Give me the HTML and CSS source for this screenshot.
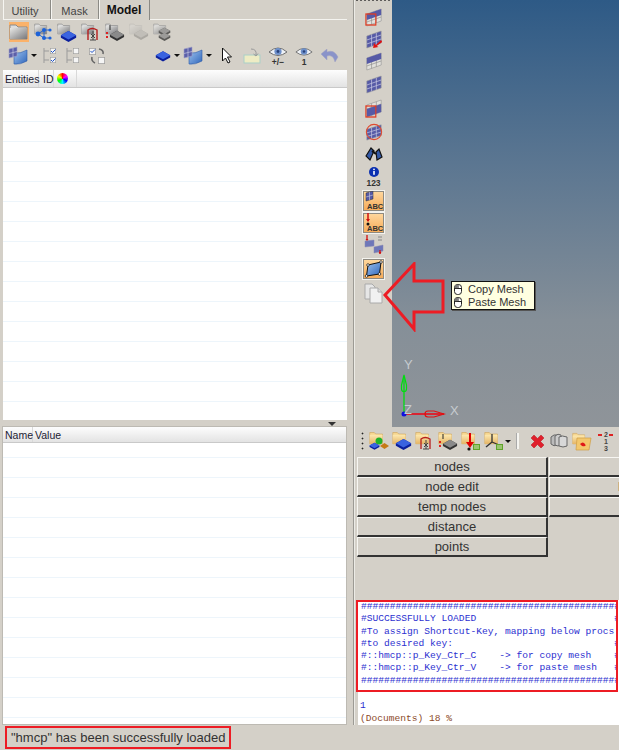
FILE: index.html
```html
<!DOCTYPE html>
<html lang="en">
<head>
<meta charset="utf-8">
<title>HyperMesh</title>
<link rel="stylesheet" href="styles.css">
</head>
<body>
<svg class="defs" width="0" height="0" aria-hidden="true">
  <defs>
    <linearGradient id="gf" x1="0" y1="0" x2="1" y2="1"><stop offset="0" stop-color="#e8e8e6"/><stop offset="1" stop-color="#77777a"/></linearGradient>
    <linearGradient id="yf" x1="0" y1="0" x2="0" y2="1"><stop offset="0" stop-color="#fde9b0"/><stop offset="1" stop-color="#e5b566"/></linearGradient>
    <linearGradient id="bm" x1="0" y1="0" x2="1" y2="1"><stop offset="0" stop-color="#9fc3ee"/><stop offset="1" stop-color="#2f66bb"/></linearGradient>
    <symbol id="folder" viewBox="0 0 20 20"><path d="M1 3h6l2 2h9v12H1z" fill="#ddd" stroke="#8b8b8b"/><path d="M1 6h17v11H1z" fill="url(#gf)"/></symbol>
    <symbol id="yfolder" viewBox="0 0 20 20"><path d="M1 2h6l2 2h9v13H1z" fill="#f6d68f" stroke="#c99d50" stroke-width=".7"/><path d="M1 5h17v12H1z" fill="url(#yf)"/></symbol>
    <symbol id="cube" viewBox="0 0 20 14"><path d="M1 6l9-5 9 5v3l-9 5-9-5z" fill="#0b1f9c"/><path d="M1 6l9-5 9 5-9 5z" fill="#3a63e0"/></symbol>
    <symbol id="gcube" viewBox="0 0 20 14"><path d="M1 6l9-5 9 5v3l-9 5-9-5z" fill="#333"/><path d="M1 6l9-5 9 5-9 5z" fill="#8a8a8a"/></symbol>
    <symbol id="mesh" viewBox="0 0 20 20"><path d="M2 7l16-5v12L2 19z" fill="#565aa6" stroke="#9a9a9a" stroke-width=".6"/><path d="M7.300 5.500v12M12.600 3.800v12M2 11l16-5M2 15l16-5" stroke="#c3c5e0" stroke-width=".8" fill="none"/></symbol>
    <symbol id="hmesh" viewBox="0 0 20 20"><path d="M2 7l16-5v12L2 19z" fill="#e2e1dc" stroke="#8d8d8d" stroke-width=".6"/><path d="M7.300 5.500v12M12.600 3.800v12M2 11l16-5M2 15l16-5" stroke="#8d8d8d" stroke-width=".7" fill="none"/></symbol>
    <symbol id="bsurf" viewBox="0 0 20 20"><path d="M6 7q6 1 13-3v11q-7 4-13 3z" fill="url(#bm)" stroke="#2d5aa8" stroke-width=".6"/><path d="M1 3l8-2v9l-8 2z" fill="#5b5fa9" stroke="#9ea0c8" stroke-width=".6"/><path d="M5 2v9M1 7.500l8-2" stroke="#c3c5e0" stroke-width=".7"/></symbol>
    <symbol id="eye" viewBox="0 0 20 12"><path d="M1 6q9-8 18 0q-9 7-18 0z" fill="#eef1f6" stroke="#6d6d6d"/><circle cx="10" cy="5.500" r="3.600" fill="#6d8fc9"/><circle cx="10" cy="5.500" r="1.400" fill="#27417c"/></symbol>
    <symbol id="check" viewBox="0 0 10 10"><rect x=".5" y=".5" width="9" height="9" fill="#f5f5f5" stroke="#9b9b9b"/></symbol>
    <symbol id="mouse" viewBox="0 0 8 11"><rect x=".5" y=".5" width="7" height="10" rx="3" fill="#fff" stroke="#222"/><path d="M.5 4.500h7M4 .5v4" stroke="#222"/><rect x="1" y="1" width="2.600" height="3.200" fill="#777"/></symbol>
  </defs>
</svg>

<div class="app">
  <aside class="left">
    <nav class="tabs">
      <span class="tab tab-first">Utility</span>
      <span class="tab">Mask</span>
      <span class="tab tab-active">Model</span>
    </nav>
    <div class="tool-row tool-row-a">
      <span class="ic ic-on"><svg width="20" height="20"><use href="#folder"/></svg></span>
      <span class="ic"><svg width="20" height="20" viewBox="0 0 20 20"><use href="#folder" width="14" height="14" x="1" y="0"/><path d="M5 12l6-4 5 0M11 8v8M5 12l6 4 5 0" stroke="#2c67c9" fill="none"/><circle cx="5" cy="12" r="2.400" fill="#1d62d8"/><circle cx="11" cy="8" r="2" fill="#1d62d8"/><circle cx="11" cy="16" r="2" fill="#1d62d8"/><circle cx="17" cy="8" r="1.600" fill="#1d62d8"/><circle cx="17" cy="16" r="1.600" fill="#1d62d8"/></svg></span>
      <span class="ic"><svg width="20" height="20" viewBox="0 0 20 20"><use href="#folder" width="14" height="14" x="0" y="0"/><use href="#cube" x="3" y="8" width="17" height="12"/></svg></span>
      <span class="ic"><svg width="20" height="20" viewBox="0 0 20 20"><use href="#folder" width="14" height="14" x="0" y="0"/><path d="M7 18V8q4-3 9 0v10" fill="none" stroke="#b71d1d" stroke-width="1.400"/><path d="M9 18h6M12 9v9M10 12l4 4M14 12l-4 4" stroke="#444" fill="none"/></svg></span>
      <span class="ic"><svg width="20" height="20" viewBox="0 0 20 20"><use href="#folder" width="14" height="14" x="0" y="0"/><use href="#gcube" x="4" y="8" width="16" height="11"/><path d="M5 3v5" stroke="#222"/><path d="M1 11h2M1 15h2" stroke="#d22" stroke-width="2"/></svg></span>
      <span class="ic ic-dim"><svg width="20" height="20" viewBox="0 0 20 20"><use href="#folder" width="14" height="14" x="0" y="0"/><use href="#gcube" x="4" y="7" width="16" height="11"/></svg></span>
      <span class="ic ic-half"><svg width="20" height="20" viewBox="0 0 20 20"><use href="#folder" width="14" height="14" x="0" y="0"/><use href="#gcube" x="5" y="5" width="13" height="9"/><use href="#gcube" x="5" y="10" width="13" height="9"/></svg></span>
    </div>
    <div class="tool-row tool-row-b">
      <span class="ic"><svg width="20" height="20"><use href="#bsurf"/></svg></span><span class="drop"></span>
      <span class="ic ic-list"><svg width="16" height="18" viewBox="0 0 16 18"><path d="M1 1v15M1 4h5M1 13h5" stroke="#9b9b9b" fill="none"/><use href="#check" x="6" y="1" width="8" height="6"/><use href="#check" x="6" y="10" width="8" height="6"/><path d="M8 4l1.500 1.500 3-3M8 13l1.500 1.500 3-3" stroke="#1c50c8" fill="none"/></svg></span>
      <span class="ic ic-list"><svg width="16" height="18" viewBox="0 0 16 18"><path d="M1 1v15M1 4h5M1 13h5" stroke="#9b9b9b" fill="none"/><use href="#check" x="6" y="1" width="8" height="6"/><use href="#check" x="6" y="10" width="8" height="6"/></svg></span>
      <span class="ic ic-list"><svg width="18" height="18" viewBox="0 0 18 18"><use href="#check" x="1" y="1" width="7" height="7"/><use href="#check" x="10" y="10" width="7" height="7"/><path d="M2.500 4l1.500 1.500 3-3" stroke="#1c50c8" fill="none"/><path d="M11 2q5 1 4 5M4 10q-1 4 3 6" stroke="#666" stroke-width="1.600" fill="none"/></svg></span>
      <span class="ic ic-far"><svg width="16" height="12"><use href="#cube"/></svg></span><span class="drop"></span>
      <span class="ic"><svg width="20" height="20"><use href="#bsurf"/></svg></span><span class="drop"></span>
      <span class="ic ic-arrow"><svg width="12" height="18" viewBox="0 0 12 18"><path d="M1.500 1v13l3-3 2.500 5 2-1-2.500-5h4z" fill="#fff" stroke="#111"/></svg></span>
      <span class="ic ic-sw"><svg width="18" height="18" viewBox="0 0 18 18"><rect x="1" y="8" width="16" height="8" fill="#eeecc4" stroke="#a9cfc8"/><path d="M8 2q6 0 5 6M10.500 7l2.500 2 2-2.500" stroke="#999" fill="none"/></svg></span>
      <span class="ic ic-eye"><svg width="20" height="12"><use href="#eye"/></svg><b>+/−</b></span>
      <span class="ic ic-eye"><svg width="18" height="12"><use href="#eye"/></svg><b>1</b></span>
      <span class="ic"><svg width="18" height="14" viewBox="0 0 18 14"><path d="M17 8Q13 0 6 3V0L0 5l6 6V7q6-2 8 6z" fill="#8a93c9" stroke="#a3a3c0" stroke-width=".5"/></svg></span>
    </div>
    <section class="table table-top">
      <div class="thead"><span class="th th-ent">Entities</span><span class="th th-id">ID</span><span class="th th-col"><span class="wheel"></span></span></div>
      <div class="tbody"></div>
    </section>
    <div class="splitter"><span class="tri"></span></div>
    <section class="table table-bottom">
      <div class="thead"><span class="th th-name">Name</span><span class="th">Value</span></div>
      <div class="tbody tbody-b"></div>
    </section>
  </aside>

  <div class="sash"></div>

  <main class="right">
    <div class="stage">
      <div class="strip">
        <span class="grip-top"></span>
        <span class="s s22"><svg width="18" height="20" viewBox="0 0 20 20" preserveAspectRatio="none"><use href="#hmesh"/><path d="M2 7l16-5v6L2 13z" fill="#565aa6"/><rect x="1" y="7" width="11" height="11" fill="none" stroke="#e03c24" stroke-width="1.300"/></svg></span>
        <span class="s s22"><svg width="18" height="20" viewBox="0 0 20 20" preserveAspectRatio="none"><use href="#mesh"/><path d="M18 11l-6 5-2-2-1 5 6-1-2-1 6-4z" fill="#e01010"/></svg></span>
        <span class="s s22"><svg width="18" height="20" viewBox="0 0 20 20" preserveAspectRatio="none"><use href="#hmesh"/><path d="M2 7l16-5v6L2 13z" fill="#565aa6"/></svg></span>
        <span class="s s24"><svg width="18" height="20" viewBox="0 0 20 20" preserveAspectRatio="none"><use href="#mesh"/></svg></span>
        <span class="s s24"><svg width="18" height="20" viewBox="0 0 20 20" preserveAspectRatio="none"><use href="#hmesh"/><path d="M2 11l16-5v8L2 19z" fill="#565aa6"/><rect x="1" y="8" width="11" height="11" fill="none" stroke="#e03c24" stroke-width="1.300"/></svg></span>
        <span class="s s23"><svg width="18" height="18" viewBox="0 0 20 20"><use href="#mesh"/><circle cx="10" cy="10" r="8.500" fill="none" stroke="#e04a30" stroke-width="1.200"/></svg></span>
        <span class="s s22"><svg width="18" height="16" viewBox="0 0 18 16"><path d="M1 10l5-8 3 3-4 9zM11 6l3-3 3 8-5 3z" fill="#345aa8" stroke="#111" stroke-width="1.200"/><path d="M7 5l4 3" stroke="#111" stroke-width="2"/></svg></span>
        <span class="s s24 s-info"><svg width="10" height="10" viewBox="0 0 9 9"><circle cx="4.500" cy="4.500" r="4.500" fill="#0a2fb0"/><rect x="3.800" y="3.500" width="1.400" height="3.500" fill="#fff"/><rect x="3.800" y="1.500" width="1.400" height="1.200" fill="#fff"/></svg><b>123</b></span>
        <span class="s s23"><span class="orange"><svg width="20" height="20" viewBox="0 0 20 20"><path d="M2 2l7-2v8l-7 2z" fill="#565aa6" stroke="#333" stroke-width=".5"/><path d="M5.500 1v8M2 6l7-2" stroke="#ccd" stroke-width=".6"/><text x="3" y="18" class="abc">ABC</text></svg></span></span>
        <span class="s s22"><span class="orange"><svg width="20" height="20" viewBox="0 0 20 20"><path d="M4 0v8" stroke="#d01010" stroke-width="1.500"/><path d="M2 6l2 3 2-3z" fill="#d01010"/><circle cx="4" cy="11" r="1.500" fill="#111"/><text x="3" y="18" class="abc">ABC</text></svg></span></span>
        <span class="s s22"><svg width="20" height="20" viewBox="0 0 20 20"><path d="M1 6l9-1v6l-9 1zM10 12l9-2v6l-9 2z" fill="#6e77b9" stroke="#8a8ab0" stroke-width=".5"/><path d="M3 0v5M16 15v4" stroke="#d01010" stroke-width="1.300"/><path d="M1.500 4l1.500 2 1.500-2zM14.500 17l1.500 2 1.500-2z" fill="#d01010"/><path d="M14 2h4M14 5h4" stroke="#888"/></svg></span>
        <span class="s s25"><span class="orange"><svg width="20" height="20" viewBox="0 0 20 20"><path d="M4 6l13-3-1.500 12-13 2z" fill="url(#bm)" stroke="#111"/><g fill="#fff" stroke="#111" stroke-width=".7"><circle cx="4" cy="6" r="1.300"/><circle cx="17" cy="3" r="1.300"/><circle cx="15.500" cy="15" r="1.300"/><circle cx="2.500" cy="17" r="1.300"/></g></svg></span></span>
        <span class="s s24"><svg width="19" height="21" viewBox="0 0 19 21"><path d="M1 1h7l3 3v12H1z" fill="#e6e6e6" stroke="#aaa"/><path d="M6 5h8l4 4v11H6z" fill="#f1f1f1" stroke="#aaa"/><path d="M14 5v4h4" fill="#ddd" stroke="#aaa"/></svg></span>
      </div>
      <div class="viewport">
        <svg class="axes" width="70" height="60" viewBox="0 0 70 60"><path d="M12 54V17" stroke="#00dd10" stroke-width="1.300"/><path d="M12 15l2.500 10v4a2.500 2.500 0 0 1-5 0v-4z" fill="none" stroke="#00dd10" stroke-width="1.200"/><path d="M12 54h40" stroke="#f00010" stroke-width="1.300"/><path d="M52 54l-10-3h-6a3 3 0 0 0 0 6h6z" fill="none" stroke="#e01010" stroke-width="1.200"/><circle cx="12" cy="54" r="2.500" fill="#1010e0"/><text x="12" y="9" class="ax">Y</text><text x="12" y="54" class="ax">Z</text><text x="58" y="55" class="ax">X</text></svg>
      </div>
      <svg class="callout" width="68" height="70" viewBox="0 0 68 70"><path d="M3 33L32 2v17h29v31H32v17z" fill="none" stroke="#ed1c24" stroke-width="3"/></svg>
      <div class="tooltip">
        <div class="tip-row"><svg width="8" height="11"><use href="#mouse"/></svg><span>Copy Mesh</span></div>
        <div class="tip-row"><svg width="8" height="11"><use href="#mouse"/></svg><span>Paste Mesh</span></div>
      </div>
    </div>

    <div class="toolbar">
      <span class="dots"></span>
      <svg width="20" height="20" viewBox="0 0 20 20"><use href="#yfolder" width="15" height="15"/><circle cx="10" cy="10" r="3.500" fill="#1fb32a"/><use href="#cube" x="0" y="11" width="11" height="8"/><path d="M11 15l4.500-3 4.500 3-4.500 3z" fill="#c57a16"/></svg>
      <svg width="20" height="20" viewBox="0 0 20 20"><use href="#yfolder" width="15" height="15"/><use href="#cube" x="3" y="7" width="17" height="12"/></svg>
      <svg width="20" height="20" viewBox="0 0 20 20"><use href="#yfolder" width="15" height="15"/><path d="M6 18V8q4-3 9 0v10" fill="none" stroke="#b71d1d" stroke-width="1.300"/><path d="M8 18h6M11 9v9M9 12l4 4M13 12l-4 4" stroke="#444" fill="none"/></svg>
      <svg width="20" height="20" viewBox="0 0 20 20"><use href="#yfolder" width="15" height="15"/><use href="#gcube" x="4" y="8" width="16" height="11"/><path d="M5 3v5" stroke="#222"/><path d="M1 11h2M1 15h2" stroke="#d22" stroke-width="2"/></svg>
      <svg width="20" height="20" viewBox="0 0 20 20"><use href="#yfolder" width="15" height="15"/><path d="M9 2v12" stroke="#e00000" stroke-width="2"/><path d="M5 11l4 6 4-6z" fill="#e00000"/><circle cx="8" cy="18" r="1.600" fill="#111"/><rect x="12" y="13" width="7" height="6" fill="#5fa32a"/><path d="M13 15h5M13 17h5" stroke="#d6e6b5"/></svg>
      <svg width="20" height="20" viewBox="0 0 20 20"><use href="#yfolder" width="15" height="15"/><path d="M8 11V3M8 11l-6 5M8 11l7 3" stroke="#333" stroke-width="1.300"/><rect x="12" y="13" width="7" height="6" fill="#5fa32a"/><path d="M13 15h5M13 17h5" stroke="#d6e6b5"/></svg>
      <span class="drop"></span>
      <span class="vsep"></span>
      <svg width="17" height="17" viewBox="0 0 17 17"><path d="M2 5l3-3 3.500 3.500L12 2l3 3-3.500 3.500L15 12l-3 3-3.500-3.500L5 15l-3-3 3.500-3.500z" fill="#e0202c" stroke="#b31a20" stroke-width=".5"/></svg>
      <svg width="20" height="18" viewBox="0 0 20 18"><path d="M2 5q3-3 6-2v10q-3 2-6-1z" fill="#bbb" stroke="#666"/><path d="M6 4q3-3 6-1v10q-3 2-6 0z" fill="#ccc" stroke="#666"/><path d="M10 5q3-2 8 0v9q-4 2-8 0z" fill="#d8d8d8" stroke="#666"/></svg>
      <svg width="20" height="19" viewBox="0 0 20 19"><use href="#yfolder" width="14" height="14"/><path d="M5 6h14l-2 12H4z" fill="#f3c76c" stroke="#cf9d45" stroke-width=".7"/><path d="M8 12q3-3 5 0t-3 2z" fill="#e01818"/></svg>
      <span class="nums"><i class="n2">2</i><i class="n1">1</i><i class="n3">3</i></span>
    </div>

    <div class="buttons">
      <div class="btn-col btn-col-main">
        <button class="btn">nodes</button>
        <button class="btn">node edit</button>
        <button class="btn">temp nodes</button>
        <button class="btn">distance</button>
        <button class="btn">points</button>
      </div>
      <div class="btn-col btn-col-side">
        <button class="btn"></button>
        <button class="btn">line edit</button>
        <button class="btn"></button>
      </div>
    </div>

    <div class="console">
      <div class="loaded">
<pre class="blue">##############################################
#SUCCESSFULLY LOADED                        #
#To assign Shortcut-Key, mapping below procs:
#to desired key:                            #
#::hmcp::p_Key_Ctr_C    -> for copy mesh    #
#::hmcp::p_Key_Ctr_V    -> for paste mesh   #
##############################################</pre>
      </div>
      <pre class="out"><span class="blue">1</span>
<span class="brown">(Documents) 18 %</span></pre>
    </div>
  </main>

  <footer class="status"><span class="status-msg">"hmcp" has been successfully loaded</span></footer>
</div>
</body>
</html>
```

FILE: styles.css
```css
* { box-sizing: border-box; }
html, body { margin: 0; height: 100%; }
body {
  width: 619px;
  height: 750px;
  overflow: hidden;
  background: #d4d0c8;
  font-family: "Liberation Sans", Arial, sans-serif;
  font-size: 11px;
  color: #222;
}
.defs { position: absolute; }
.app {
  display: grid;
  grid-template-columns: 347px 8px 264px;
  grid-template-rows: 725px 25px;
  width: 619px;
  height: 750px;
}

/* left panel */
.left { display: flex; flex-direction: column; padding-left: 3px; min-height: 0; }
.tabs { display: flex; height: 20px; border-bottom: 1px solid #f4f3ef; }
.tab {
  width: 48px;
  height: 19px;
  padding-top: 5px;
  text-align: center;
  color: #444;
  font-size: 11px;
  border-right: 1px solid #8b8a85;
  background: #d4d0c8;
  box-shadow: inset 1px 0 #f6f5f1;
}
.tab-first { padding-right: 3px; }
.tab-active { width: 51px; height: 20px; padding-top: 3px; font-weight: bold; color: #111; font-size: 12px; }
.tool-row { display: flex; align-items: center; }
.tool-row-a { height: 23px; padding-left: 6px; gap: 4px; }
.tool-row-b { height: 27px; padding: 0 0 2px 5px; }
.ic { display: flex; flex-direction: column; align-items: center; flex: none; width: 20px; }
.ic-on { background: #fbb26a; height: 20px; justify-content: center; }
.ic-dim { opacity: .25; }
.ic-half { opacity: .75; }
.ic-list { margin-left: 3px; width: 16px; margin-right: 4px; }
.ic-far { width: 16px; margin-left: 46px; }
.ic-arrow { width: 14px; margin-left: 5px; }
.ic-sw { margin-left: 8px; }
.ic-eye { margin-left: 6px; width: 20px; }
.ic-eye + .ic-eye { margin-left: 6px; }
.ic-eye + .ic { margin-left: 6px; }
.ic-eye b { font-size: 8.500px; line-height: 8px; color: #333; }
.drop { flex: none; width: 0; height: 0; margin: 0 3px; border: 3px solid transparent; border-top: 3px solid #111; border-bottom: 0; }

.table { display: flex; flex-direction: column; background: #fff; }
.table-top { height: 350px; }
.table-bottom { flex: 1; box-shadow: 0 0 0 1px #bdbab3; margin-right: 1px; margin-bottom: 1px; }
.thead {
  display: flex;
  flex: none;
  height: 18px;
  background: linear-gradient(#fdfdfd, #e3e3e3);
  border-bottom: 1px solid #c9c9c9;
}
.table-bottom .thead { height: 16px; }
.th { padding: 3px 2px 0; font-size: 10.500px; color: #223; border-right: 1px solid #d9d9d9; line-height: 13px; }
.table-bottom .th { padding-top: 2px; }
.th-ent { width: 36px; }
.th-id { width: 15px; padding-left: 4px; }
.th-col { width: 23px; display: flex; align-items: center; padding: 0 0 0 3px; }
.th-name { width: 30px; }
.table-bottom .th:last-child { border: 0; padding-left: 2px; }
.wheel {
  width: 11px;
  height: 11px;
  border-radius: 50%;
  background: conic-gradient(#f00, #f0f, #00f, #0ff, #0f0, #ff0, #f00);
}
.tbody {
  flex: 1;
  background: repeating-linear-gradient(#fff 0 19px, #edf5fb 19px 20px);
  background-position: 0 -6px;
}
.tbody-b { background-position: 0 -5px; }
.splitter {
  display: flex;
  justify-content: flex-end;
  flex: none;
  height: 7px;
  padding: 2px 11px 0 0;
  background: #d4d0c8;
}
.tri { width: 0; height: 0; border: 4px solid transparent; border-top: 4px solid #333; border-bottom: 0; }

.sash { background: linear-gradient(90deg, #d4d0c8 0 6px, #9c9a94 6px 7px, #ecebe6 7px 8px); }

/* right column */
.right { display: flex; flex-direction: column; min-width: 0; overflow: hidden; }
.stage { display: flex; position: relative; height: 427px; flex: none; }
.strip { display: flex; flex-direction: column; flex: none; width: 37px; align-items: center; }
.grip-top { height: 6px; width: 100%; flex: none; background: radial-gradient(circle, #333 0 .6px, transparent 1px) 0 -2px / 4px 4px repeat-x; }
.s { display: flex; flex-direction: column; align-items: center; justify-content: center; flex: none; width: 100%; }
.s22 { height: 22px; }
.s23 { height: 23px; }
.s24 { height: 24px; }
.s25 { height: 25px; }
.s-info b { font-size: 8.500px; line-height: 9px; color: #333; margin-top: 2px; }
.orange {
  display: flex;
  flex: none;
  width: 23px;
  height: 22px;
  align-items: center;
  justify-content: center;
  background: linear-gradient(#ffd9a0, #f5a955);
  border: 1px solid #f4f3ee;
  box-shadow: inset 0 0 0 1px #8f8a80;
}
.abc { font: bold 7.500px "Liberation Sans", sans-serif; fill: #333; }
.viewport {
  position: relative;
  flex: 1;
  background: linear-gradient(#2e5a86 0, #5b7691 38%, #858f98 75%, #8f9499 100%);
}
.axes { position: absolute; left: 0; top: 360px; overflow: visible; }
.ax { font: 13px "Liberation Sans", sans-serif; fill: #c6cbcf; }
.callout { position: absolute; left: 27px; top: 262px; }
.tooltip {
  position: absolute;
  left: 96px;
  top: 281px;
  width: 84px;
  height: 29px;
  padding: 1px 0 0 2px;
  background: #ffffe1;
  border: 1px solid #111;
  box-shadow: 1px 1px 0 #555;
  font-size: 11px;
  line-height: 13px;
  color: #333;
}
.tip-row { display: flex; gap: 6px; align-items: center; }

.toolbar { display: flex; align-items: center; flex: none; height: 28px; padding-left: 6px; gap: 3px; }
.dots { width: 3px; height: 20px; margin-right: 2px; background: radial-gradient(circle, #222 0 .8px, transparent 1.100px) 0 0 / 3px 5px repeat-y; }
.toolbar .drop { margin: 0 0 0 -2px; }
.vsep { width: 2px; height: 16px; margin: 0 7px 0 3px; background: #f5f4f0; box-shadow: -1px 0 #aaa; }
.nums { position: relative; flex: none; width: 17px; height: 21px; margin-left: 2px; font: bold 7px/7px "Liberation Sans", sans-serif; color: #444; }
.nums i { position: absolute; font-style: normal; }
.n2 { left: 7px; top: 0; }
.n1 { left: 7px; top: 7px; }
.n3 { left: 7px; top: 14px; }
.nums::before, .nums::after { content: ""; position: absolute; top: 3px; width: 4px; height: 2px; background: #d22; }
.nums::before { left: 1px; }
.nums::after { right: 1px; }

.buttons { display: flex; flex: none; height: 145px; padding: 2px 0 0 2px; gap: 1px; overflow: hidden; }
.btn-col { display: flex; flex-direction: column; flex: none; }
.btn-col-main { width: 191px; }
.btn-col-side { width: 184px; }
.btn {
  display: block;
  width: 100%;
  height: 20px;
  padding: 0;
  font: 13px/15px "Liberation Sans", sans-serif;
  color: #333;
  background: #d4d0c8;
  border: 1px solid;
  border-color: #f7f6f2 #333 #333 #f7f6f2;
  border-bottom-width: 2px;
  border-right-width: 2px;
}

.console { flex: 1; min-height: 0; margin-left: 3px; background: #fff; display: flex; flex-direction: column; }
.loaded { height: 92px; flex: none; margin: 0 1px 0 -2px; padding: 0 0 0 3px; border: 2px solid #ed1c24; overflow: hidden; }
pre { margin: 0; font: 9.600px/12.300px "Liberation Mono", "Courier New", monospace; }
.loaded pre { margin-top: -1px; }
.blue { color: #2c2fd0; }
.brown { color: #8b4a2a; }
.out { padding: 7px 0 0 2px; line-height: 13px; }

.status { grid-column: 1 / -1; padding: 1px 0 0 5px; }
.status-msg { display: inline-block; height: 23px; padding: 2px 4px 0 4px; border: 2px solid #ed1c24; font-size: 13px; line-height: 16px; color: #333; white-space: nowrap; }
```
